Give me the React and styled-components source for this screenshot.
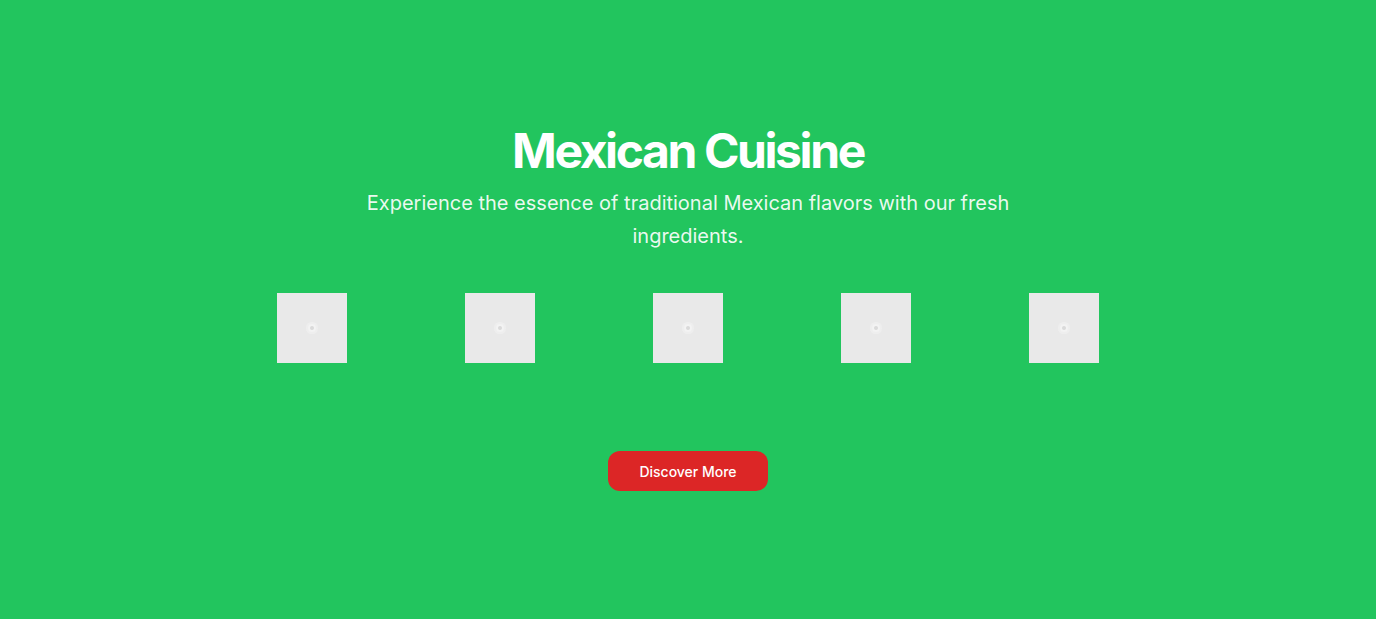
import React from "react";
import styled, { createGlobalStyle } from "styled-components";

const GlobalStyle = createGlobalStyle`
  html, body {
    margin: 0;
    padding: 0;
  }
  body {
    font-family: Inter, "Noto Sans", sans-serif;
    background: #22c55e;
  }
`;

const dishes = ["Tacos", "Enchiladas", "Guacamole", "Tamales", "Churros"];

const App = () => {
  return (
    <>
      <GlobalStyle />
      <Hero>
        <Title>Mexican Cuisine</Title>
        <Subtitle>
          Experience the essence of traditional Mexican flavors with our fresh
          ingredients.
        </Subtitle>
        <Gallery>
          {dishes.map((dish) => (
            <Cell key={dish}>
              <Thumb aria-label={dish}>
                <Spinner />
              </Thumb>
            </Cell>
          ))}
        </Gallery>
        <DiscoverButton>Discover More</DiscoverButton>
      </Hero>
    </>
  );
};

export default App;

const Hero = styled.section`
  box-sizing: border-box;
  min-height: 619px;
  display: flex;
  flex-direction: column;
  align-items: center;
  padding-top: 127px;
  background-color: #22c55e;
  color: #ffffff;
  text-align: center;
`;

const Title = styled.h1`
  margin: 0;
  font-size: 48px;
  line-height: 1;
  font-weight: 700;
  letter-spacing: -0.05em;
`;

const Subtitle = styled.p`
  margin: 12px 0 0;
  max-width: 672px;
  font-size: 20px;
  line-height: 33px;
  color: rgba(255, 255, 255, 0.92);
`;

const Gallery = styled.div`
  margin-top: 40px;
  width: 940px;
  display: grid;
  grid-template-columns: repeat(5, 1fr);
`;

const Cell = styled.div`
  display: flex;
  justify-content: center;
`;

const Thumb = styled.div`
  width: 70px;
  height: 70px;
  background: #e9e9e9;
  display: flex;
  align-items: center;
  justify-content: center;
`;

const Spinner = styled.span`
  width: 4px;
  height: 4px;
  border-radius: 50%;
  background: #dadada;
  box-shadow: 0 0 0 2px #f3f3f3, 0 0 0 4px #eeeeee;
`;

const DiscoverButton = styled.button`
  margin-top: 88px;
  width: 160px;
  height: 40px;
  border: none;
  border-radius: 12px;
  background: #dc2626;
  color: #ffffff;
  font-family: Inter, "Noto Sans", sans-serif;
  font-size: 14px;
  font-weight: 500;
  cursor: pointer;
`;
